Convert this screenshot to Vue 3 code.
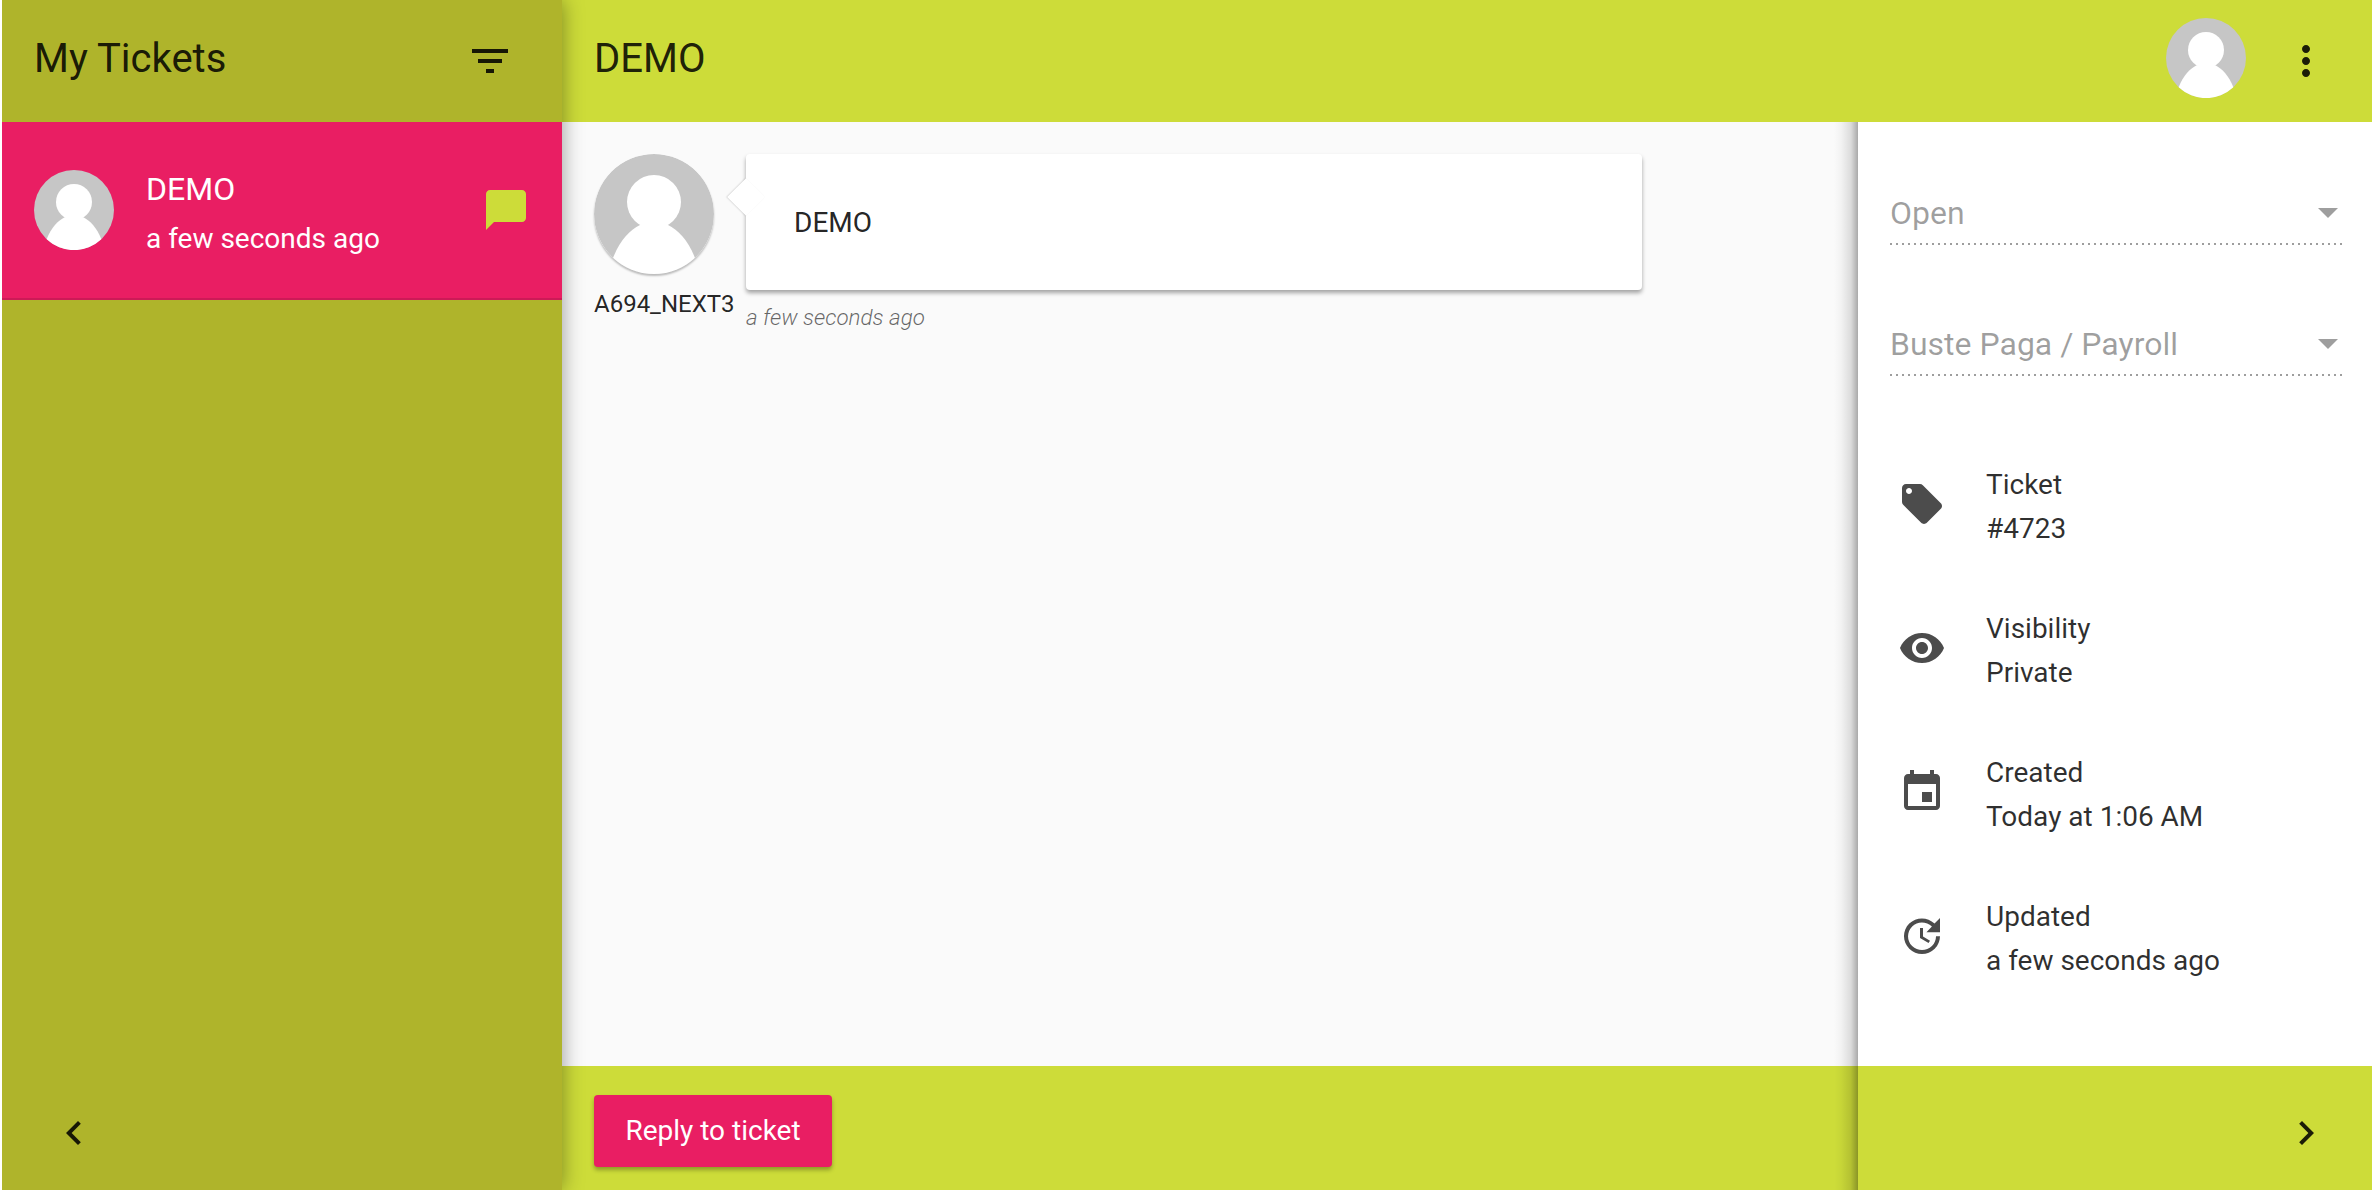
<script setup>
const details = [
  { label: 'Ticket', value: '#4723', icon: 'M21.41 11.58l-9-9C12.05 2.22 11.55 2 11 2H4c-1.1 0-2 .9-2 2v7c0 .55.22 1.05.59 1.42l9 9c.36.36.86.58 1.41.58.55 0 1.05-.22 1.41-.59l7-7c.37-.36.59-.86.59-1.41 0-.55-.23-1.06-.59-1.42zM5.5 7C4.67 7 4 6.33 4 5.5S4.67 4 5.5 4 7 4.67 7 5.5 6.33 7 5.5 7z' },
  { label: 'Visibility', value: 'Private', icon: 'M12 4.5C7 4.5 2.73 7.61 1 12c1.73 4.39 6 7.5 11 7.5s9.27-3.11 11-7.5c-1.73-4.39-6-7.5-11-7.5zM12 17c-2.76 0-5-2.24-5-5s2.24-5 5-5 5 2.24 5 5-2.24 5-5 5zm0-8c-1.66 0-3 1.34-3 3s1.34 3 3 3 3-1.34 3-3-1.34-3-3-3z' },
  { label: 'Created', value: 'Today at 1:06 AM', icon: 'M17 12h-5v5h5v-5zM16 1v2H8V1H6v2H5c-1.11 0-1.99.9-1.99 2L3 19c0 1.1.89 2 2 2h14c1.1 0 2-.9 2-2V5c0-1.1-.9-2-2-2h-1V1h-2zm3 18H5V8h14v11z' },
  { label: 'Updated', value: 'a few seconds ago', icon: 'M21 10.12h-6.78l2.74-2.82c-2.73-2.7-7.15-2.8-9.88-.1-2.73 2.71-2.73 7.08 0 9.79 2.73 2.71 7.15 2.71 9.88 0C18.32 15.65 19 14.08 19 12.1h2c0 1.98-.88 4.55-2.64 6.29-3.51 3.48-9.21 3.48-12.72 0-3.5-3.47-3.53-9.11-.02-12.58 3.51-3.47 9.14-3.47 12.65 0L21 3v7.12zM12.5 8v4.25l3.5 2.08-.72 1.21L11 13V8h1.5z' }
]

const selects = ['Open', 'Buste Paga / Payroll']
</script>

<template>
  <div class="app">
    <aside class="tickets">
      <header class="tickets-head">
        <h2>My Tickets</h2>
        <svg class="icon" viewBox="0 0 24 24"><path d="M10 18h4v-2h-4v2zM3 6v2h18V6H3zm3 7h12v-2H6v2z" /></svg>
      </header>
      <div class="ticket-row">
        <svg class="avatar avatar-80" viewBox="0 0 120 120">
          <circle cx="60" cy="60" r="60" fill="#c6c6c6" />
          <circle cx="60" cy="48" r="27" fill="#fff" />
          <path d="M19 104 C26 86 36 76 46 71 L74 71 C84 76 94 86 101 104 A60 60 0 0 1 19 104 Z" fill="#fff" />
        </svg>
        <div class="ticket-text">
          <div class="ticket-title">DEMO</div>
          <div class="ticket-time">a few seconds ago</div>
        </div>
        <svg class="icon chat" viewBox="0 0 24 24"><path d="M20 2H4c-1.1 0-1.99.9-1.99 2L2 22l4-4h14c1.1 0 2-.9 2-2V4c0-1.1-.9-2-2-2z" /></svg>
      </div>
      <div class="spacer"></div>
      <footer class="tickets-foot">
        <svg class="icon" viewBox="0 0 24 24"><path d="M15.41 7.41L14 6l-6 6 6 6 1.41-1.41L10.83 12z" /></svg>
      </footer>
    </aside>

    <div class="main">
      <header class="topbar">
        <h2>DEMO</h2>
        <svg class="avatar avatar-80 top-avatar" viewBox="0 0 120 120">
          <circle cx="60" cy="60" r="60" fill="#c6c6c6" />
          <circle cx="60" cy="48" r="27" fill="#fff" />
          <path d="M19 104 C26 86 36 76 46 71 L74 71 C84 76 94 86 101 104 A60 60 0 0 1 19 104 Z" fill="#fff" />
        </svg>
        <svg class="icon more" viewBox="0 0 24 24"><path d="M12 8c1.1 0 2-.9 2-2s-.9-2-2-2-2 .9-2 2 .9 2 2 2zm0 2c-1.1 0-2 .9-2 2s.9 2 2 2 2-.9 2-2-.9-2-2-2zm0 6c-1.1 0-2 .9-2 2s.9 2 2 2 2-.9 2-2-.9-2-2-2z" /></svg>
      </header>

      <div class="body">
        <section class="thread">
          <div class="message">
            <div class="author">
              <svg class="avatar avatar-120" viewBox="0 0 120 120">
                <circle cx="60" cy="60" r="60" fill="#c6c6c6" />
                <circle cx="60" cy="48" r="27" fill="#fff" />
                <path d="M19 104 C26 86 36 76 46 71 L74 71 C84 76 94 86 101 104 A60 60 0 0 1 19 104 Z" fill="#fff" />
              </svg>
              <span class="author-name">A694_NEXT3</span>
            </div>
            <div class="bubble-col">
              <div class="bubble">DEMO</div>
              <div class="bubble-time">a few seconds ago</div>
            </div>
          </div>
        </section>

        <section class="info">
          <div v-for="s in selects" :key="s" class="select">
            <span>{{ s }}</span>
            <i class="caret"></i>
          </div>
          <ul class="details">
            <li v-for="d in details" :key="d.label">
              <svg class="detail-icon" viewBox="0 0 24 24"><path :d="d.icon" /></svg>
              <div>
                <div>{{ d.label }}</div>
                <div>{{ d.value }}</div>
              </div>
            </li>
          </ul>
        </section>
      </div>

      <footer class="bottombar">
        <button class="reply">Reply to ticket</button>
        <svg class="icon next" viewBox="0 0 24 24"><path d="M10 6L8.59 7.41 13.17 12l-4.58 4.59L10 18l6-6z" /></svg>
      </footer>
      <div class="panel-shadow"></div>
    </div>
  </div>
</template>

<style>
html, body {
  margin: 0;
  background: #fff;
}
</style>

<style scoped>
.app {
  display: flex;
  height: 1190px;
  width: 2372px;
  overflow: hidden;
  font-family: Roboto, "Liberation Sans", sans-serif;
  color: rgba(0, 0, 0, 0.87);
  box-sizing: border-box;
  padding-left: 2px;
}

h2 {
  margin: 0 0 6px;
  font-size: 40px;
  font-weight: 400;
}

.icon {
  width: 48px;
  height: 48px;
  flex: none;
  fill: rgba(0, 0, 0, 0.87);
}

.tickets {
  width: 560px;
  flex: none;
  display: flex;
  flex-direction: column;
  background: #afb42b;
  position: relative;
  z-index: 3;
  box-shadow: 0 0 20px rgba(0, 0, 0, 0.4);
  clip-path: inset(0 -40px 0 0);
}

.tickets-head {
  height: 122px;
  display: flex;
  align-items: center;
  justify-content: space-between;
  padding: 0 48px 0 32px;
}

.ticket-row {
  height: 178px;
  box-sizing: border-box;
  display: flex;
  align-items: center;
  padding: 0 32px;
  background: #e91e63;
  border-bottom: 2px solid rgba(0, 0, 0, 0.12);
  color: #fff;
}

.avatar {
  flex: none;
  display: block;
}

.avatar-80 {
  width: 80px;
  height: 80px;
}

.avatar-120 {
  width: 120px;
  height: 120px;
  border-radius: 50%;
  box-shadow: 0 2px 2px rgba(0, 0, 0, 0.25);
}

.ticket-text {
  flex: 1;
  margin-left: 32px;
  padding-top: 6px;
}

.ticket-title {
  font-size: 32px;
  line-height: 51px;
}

.ticket-time {
  font-size: 28px;
  line-height: 48px;
}

.chat {
  fill: #cddc39;
}

.spacer {
  flex: 1;
}

.tickets-foot {
  height: 124px;
  display: flex;
  align-items: center;
  padding-left: 48px;
  padding-top: 10px;
  box-sizing: border-box;
}

.main {
  flex: 1;
  min-width: 0;
  display: flex;
  flex-direction: column;
  position: relative;
}

.topbar {
  height: 122px;
  flex: none;
  display: flex;
  align-items: center;
  padding: 0 42px 0 32px;
  background: #cddc39;
  position: relative;
  z-index: 2;
}

.topbar h2 {
  flex: 1;
}

.top-avatar {
  margin: -6px 36px 0 0;
}

.body {
  flex: 1;
  display: flex;
  min-height: 0;
}

.thread {
  flex: 1;
  background: #fafafa;
  padding: 32px;
  min-width: 0;
}

.message {
  display: flex;
  gap: 32px;
  align-items: flex-start;
}

.author {
  display: flex;
  flex-direction: column;
  width: 120px;
}

.author-name {
  margin-top: 16px;
  font-size: 24px;
  line-height: 28px;
  white-space: nowrap;
}

.bubble-col {
  width: 896px;
}

.bubble {
  position: relative;
  height: 136px;
  box-sizing: border-box;
  padding: 0 48px;
  display: flex;
  align-items: center;
  background: #fff;
  border-radius: 4px;
  font-size: 28px;
  box-shadow: 0 3px 4px rgba(0, 0, 0, 0.35);
}

.bubble::before {
  content: "";
  position: absolute;
  left: -19px;
  top: 24px;
  width: 38px;
  height: 38px;
  transform: rotate(45deg) scale(0.7);
  background: #fff;
  box-shadow: -1px 1px 2px rgba(0, 0, 0, 0.15);
}

.bubble-time {
  margin-top: 13px;
  font-size: 22.4px;
  font-style: italic;
  font-weight: 300;
  color: rgba(0, 0, 0, 0.6);
  line-height: 28px;
}

.info {
  width: 514px;
  flex: none;
  box-sizing: border-box;
  background: #fff;
  padding: 0 30px 0 32px;
  position: relative;
  z-index: 1;
}

.select {
  height: 60px;
  margin-top: 69px;
  display: flex;
  align-items: center;
  justify-content: space-between;
  font-size: 32px;
  color: rgba(0, 0, 0, 0.38);
  padding-bottom: 2px;
  background: repeating-linear-gradient(to right, rgba(0, 0, 0, 0.38) 0 2px, transparent 2px 6px) left bottom / 100% 2px no-repeat;
}

.select:first-child {
  margin-top: 61px;
}

.caret {
  width: 0;
  height: 0;
  margin-right: 4px;
  border-left: 10px solid transparent;
  border-right: 10px solid transparent;
  border-top: 10px solid rgba(0, 0, 0, 0.38);
}

.details {
  list-style: none;
  margin: 59px 0 0;
  padding: 0;
  color: rgba(0, 0, 0, 0.82);
}

.details li {
  height: 144px;
  display: flex;
  align-items: center;
  font-size: 28px;
  line-height: 44px;
}

.detail-icon {
  width: 48px;
  height: 48px;
  flex: none;
  margin: -6px 40px 0 8px;
  fill: rgba(0, 0, 0, 0.7);
}

.bottombar {
  height: 124px;
  flex: none;
  display: flex;
  align-items: center;
  justify-content: space-between;
  padding: 5px 42px 0 32px;
  box-sizing: border-box;
  background: #cddc39;
}

.reply {
  width: 238px;
  height: 72px;
  border: 0;
  padding: 0;
  border-radius: 4px;
  background: #e91e63;
  color: #fff;
  font: 400 28px Roboto, "Liberation Sans", sans-serif;
  box-shadow: 0 3px 4px rgba(0, 0, 0, 0.3);
}

.next {
  margin-top: 5px;
}

.panel-shadow {
  position: absolute;
  top: 122px;
  bottom: 0;
  right: 514px;
  width: 24px;
  z-index: 1;
  background: linear-gradient(to left, rgba(0, 0, 0, 0.32), rgba(0, 0, 0, 0.12) 30%, rgba(0, 0, 0, 0.03) 70%, transparent);
}
</style>
